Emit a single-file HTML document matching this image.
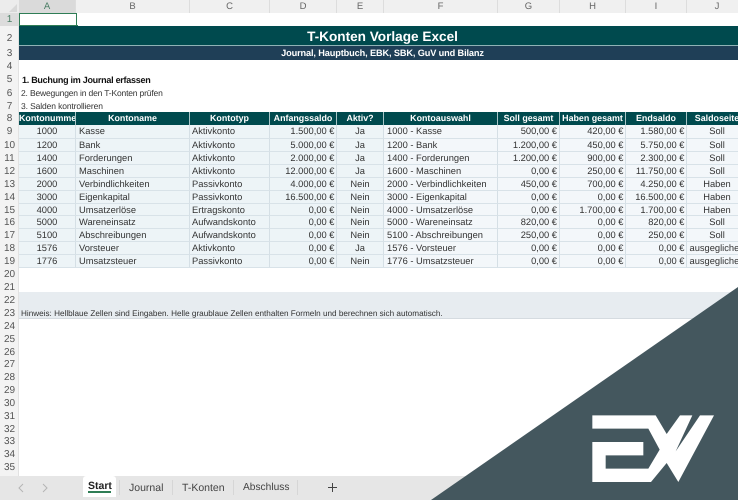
<!DOCTYPE html>
<html><head><meta charset="utf-8"><style>
html,body{margin:0;padding:0;background:#fff}
body{width:738px;height:500px;overflow:hidden;position:relative;font-family:"Liberation Sans",sans-serif;color:#333;text-rendering:geometricPrecision}
#s{position:absolute;inset:0;filter:blur(.35px)}
.a{position:absolute;white-space:nowrap}
.ch{position:absolute;top:0;height:13px;background:#f0f0f0;font-size:9.5px;line-height:13px;text-align:center;color:#666;border-right:1px solid #ddd;box-sizing:border-box}
.rh{position:absolute;left:0;width:19px;font-size:10px;text-align:center;color:#555;line-height:13px}
.r{position:absolute;left:19px;width:730px;height:13px;display:flex}
.r span{display:block;height:100%;box-sizing:border-box;font-size:9.33px;line-height:13px;white-space:nowrap;overflow:hidden;border-right:1px solid #d5dfe5;border-bottom:1px solid #d8e2e8;flex:none;background:#f3f7fa;padding:0 2px}
.r span:nth-child(-n+5){background:#edf4f7}
.r span:nth-child(1){width:57px;text-align:center}
.r span:nth-child(2){width:114px;padding-left:3px}
.r span:nth-child(3){width:80px;padding-left:2px}
.r span:nth-child(4){width:67px;text-align:right;padding-right:1.5px}
.r span:nth-child(5){width:47px;text-align:center}
.r span:nth-child(6){width:114px;padding-left:3px}
.r span:nth-child(7){width:62px;text-align:right}
.r span:nth-child(8){width:66px;text-align:right;padding-right:1.5px}
.r span:nth-child(9){width:61px;text-align:right;padding-right:1.5px}
.r span:nth-child(10){width:60px;text-align:center;padding:0;border-right:0;overflow:visible}
.h span,.h span:nth-child(n){background:#004a4e;color:#fff;font-weight:bold;text-align:center;border-right:1px solid #a9c6c8;border-bottom:0;padding:0;font-size:8.9px;line-height:13px}
.tb{position:absolute;top:482px;font-size:10.5px;color:#444}
.sp{position:absolute;top:480px;width:1px;height:15px;background:#d6d6d6}
</style></head><body><div id="s">
<div class="a" style="left:0;top:0;width:738px;height:13px;background:#f0f0f0;border-bottom:1px solid #d4d4d4;box-sizing:border-box"></div>
<div class="a" style="left:0;top:0;width:19px;height:13px;background:#ececec"></div>
<svg class="a" style="left:8px;top:3px" width="10" height="10"><path d="M9 1V9H1Z" fill="#d8d8d8"/></svg>
<div class="ch" style="left:19px;width:57px;background:#dadada;color:#4a7d64">A</div>
<div class="ch" style="left:76px;width:114px">B</div>
<div class="ch" style="left:190px;width:80px">C</div>
<div class="ch" style="left:270px;width:67px">D</div>
<div class="ch" style="left:337px;width:47px">E</div>
<div class="ch" style="left:384px;width:114px">F</div>
<div class="ch" style="left:498px;width:62px">G</div>
<div class="ch" style="left:560px;width:66px">H</div>
<div class="ch" style="left:626px;width:61px">I</div>
<div class="ch" style="left:687px;width:60px;border-right:0">J</div>

<div class="a" style="left:0;top:13px;width:19px;height:463px;background:#f3f3f3;border-right:1px solid #e2e2e2;box-sizing:border-box"></div>
<div class="rh" style="top:13px;height:13px;background:#dcdcdc;color:#4a7d64">1</div>
<div class="rh" style="top:32px">2</div>
<div class="rh" style="top:47px">3</div>
<div class="rh" style="top:60px">4</div>
<div class="rh" style="top:73px">5</div>
<div class="rh" style="top:87px">6</div>
<div class="rh" style="top:100px">7</div>
<div class="rh" style="top:112px">8</div>
<div class="rh" style="top:125px">9</div>
<div class="rh" style="top:139px">10</div>
<div class="rh" style="top:152px">11</div>
<div class="rh" style="top:165px">12</div>
<div class="rh" style="top:178px">13</div>
<div class="rh" style="top:191px">14</div>
<div class="rh" style="top:204px">15</div>
<div class="rh" style="top:216px">16</div>
<div class="rh" style="top:229px">17</div>
<div class="rh" style="top:242px">18</div>
<div class="rh" style="top:255px">19</div>
<div class="rh" style="top:268px">20</div>
<div class="rh" style="top:281px">21</div>
<div class="rh" style="top:294px">22</div>
<div class="rh" style="top:307px">23</div>
<div class="rh" style="top:320px">24</div>
<div class="rh" style="top:333px">25</div>
<div class="rh" style="top:346px">26</div>
<div class="rh" style="top:358px">27</div>
<div class="rh" style="top:371px">28</div>
<div class="rh" style="top:384px">29</div>
<div class="rh" style="top:397px">30</div>
<div class="rh" style="top:410px">31</div>
<div class="rh" style="top:423px">32</div>
<div class="rh" style="top:435px">33</div>
<div class="rh" style="top:448px">34</div>
<div class="rh" style="top:461px">35</div>

<div class="a" style="left:19px;top:13px;width:58px;height:13px;border:1.5px solid #2f7d55;box-sizing:border-box"></div>
<div class="a" style="left:75px;top:24.5px;width:3px;height:3px;background:#2f7d55"></div>

<div class="a" style="left:19px;top:26px;width:727px;height:20px;background:#004a4e;color:#fff;font-weight:bold;font-size:13.6px;line-height:22px;text-align:center;border-bottom:1px solid #8fb2b5;box-sizing:border-box">T-Konten Vorlage Excel</div>
<div class="a" style="left:19px;top:46px;width:727px;height:14px;background:#1f3f57;color:#fff;font-weight:bold;font-size:9.2px;letter-spacing:-.125px;line-height:14px;text-align:center">Journal, Hauptbuch, EBK, SBK, GuV und Bilanz</div>

<div class="a" style="left:22px;top:73px;font-size:9px;letter-spacing:-.27px;line-height:14px;font-weight:bold;color:#111">1. Buchung im Journal erfassen</div>
<div class="a" style="left:21px;top:87px;font-size:8.5px;letter-spacing:-.17px;line-height:13px">2. Bewegungen in den T-Konten prüfen</div>
<div class="a" style="left:21px;top:100px;font-size:8.5px;letter-spacing:-.12px;line-height:13px">3. Salden kontrollieren</div>

<div class="r h" style="top:111.5px"><span>Kontonummer</span><span>Kontoname</span><span>Kontotyp</span><span>Anfangssaldo</span><span>Aktiv?</span><span>Kontoauswahl</span><span>Soll gesamt</span><span>Haben gesamt</span><span>Endsaldo</span><span style="border-right:0">Saldoseite</span></div>
<div class="r" style="top:125px;height:14px"><span>1000</span><span>Kasse</span><span>Aktivkonto</span><span>1.500,00 €</span><span>Ja</span><span>1000 - Kasse</span><span>500,00 €</span><span>420,00 €</span><span>1.580,00 €</span><span>Soll</span></div>
<div class="r" style="top:139px"><span>1200</span><span>Bank</span><span>Aktivkonto</span><span>5.000,00 €</span><span>Ja</span><span>1200 - Bank</span><span>1.200,00 €</span><span>450,00 €</span><span>5.750,00 €</span><span>Soll</span></div>
<div class="r" style="top:152px"><span>1400</span><span>Forderungen</span><span>Aktivkonto</span><span>2.000,00 €</span><span>Ja</span><span>1400 - Forderungen</span><span>1.200,00 €</span><span>900,00 €</span><span>2.300,00 €</span><span>Soll</span></div>
<div class="r" style="top:165px"><span>1600</span><span>Maschinen</span><span>Aktivkonto</span><span>12.000,00 €</span><span>Ja</span><span>1600 - Maschinen</span><span>0,00 €</span><span>250,00 €</span><span>11.750,00 €</span><span>Soll</span></div>
<div class="r" style="top:178px"><span>2000</span><span>Verbindlichkeiten</span><span>Passivkonto</span><span>4.000,00 €</span><span>Nein</span><span>2000 - Verbindlichkeiten</span><span>450,00 €</span><span>700,00 €</span><span>4.250,00 €</span><span>Haben</span></div>
<div class="r" style="top:191px"><span>3000</span><span>Eigenkapital</span><span>Passivkonto</span><span>16.500,00 €</span><span>Nein</span><span>3000 - Eigenkapital</span><span>0,00 €</span><span>0,00 €</span><span>16.500,00 €</span><span>Haben</span></div>
<div class="r" style="top:204px;height:12px"><span>4000</span><span>Umsatzerlöse</span><span>Ertragskonto</span><span>0,00 €</span><span>Nein</span><span>4000 - Umsatzerlöse</span><span>0,00 €</span><span>1.700,00 €</span><span>1.700,00 €</span><span>Haben</span></div>
<div class="r" style="top:216px"><span>5000</span><span>Wareneinsatz</span><span>Aufwandskonto</span><span>0,00 €</span><span>Nein</span><span>5000 - Wareneinsatz</span><span>820,00 €</span><span>0,00 €</span><span>820,00 €</span><span>Soll</span></div>
<div class="r" style="top:229px"><span>5100</span><span>Abschreibungen</span><span>Aufwandskonto</span><span>0,00 €</span><span>Nein</span><span>5100 - Abschreibungen</span><span>250,00 €</span><span>0,00 €</span><span>250,00 €</span><span>Soll</span></div>
<div class="r" style="top:242px"><span>1576</span><span>Vorsteuer</span><span>Aktivkonto</span><span>0,00 €</span><span>Ja</span><span>1576 - Vorsteuer</span><span>0,00 €</span><span>0,00 €</span><span>0,00 €</span><span>ausgeglichen</span></div>
<div class="r" style="top:255px"><span>1776</span><span>Umsatzsteuer</span><span>Passivkonto</span><span>0,00 €</span><span>Nein</span><span>1776 - Umsatzsteuer</span><span>0,00 €</span><span>0,00 €</span><span>0,00 €</span><span>ausgeglichen</span></div>

<div class="a" style="left:19px;top:292px;width:719px;height:27px;background:#e7ecf0;border-bottom:1px solid #d5dbe0;box-sizing:border-box"></div>
<div class="a" style="left:21px;top:306.5px;font-size:8.16px;line-height:13px">Hinweis: Hellblaue Zellen sind Eingaben. Helle graublaue Zellen enthalten Formeln und berechnen sich automatisch.</div>

<div class="a" style="left:0;top:476px;width:738px;height:24px;background:#e6e6e6"></div>
<div class="a" style="left:83px;top:476px;width:33px;height:21px;background:#fff;border-radius:3px 3px 0 0"></div>
<div class="a" style="left:88px;top:480px;font-size:10.5px;font-weight:bold;color:#222">Start</div>
<div class="a" style="left:88px;top:491px;width:23px;height:1.5px;background:#2f7d55"></div>
<svg class="a" style="left:15px;top:482px" width="40" height="12" fill="none" stroke="#b4b4b4" stroke-width="1"><path d="M8 2L4 6L8 10M28 2L32 6L28 10"/></svg>
<div class="sp" style="left:119px"></div><div class="sp" style="left:172px"></div><div class="sp" style="left:233px"></div><div class="sp" style="left:297px"></div>
<div class="tb" style="left:129px">Journal</div>
<div class="tb" style="left:182px">T-Konten</div>
<div class="tb" style="left:243px;font-size:10.2px">Abschluss</div>
<svg class="a" style="left:327px;top:482px" width="11" height="11" stroke="#444" stroke-width="1"><path d="M5.5 1V10M1 5.5H10"/></svg>

<svg class="a" style="left:0;top:0" width="738" height="500"><path d="M738 287L431 500H738Z" fill="#44575e"/></svg>
<svg class="a" style="left:585px;top:408px" width="135" height="90" viewBox="0 0 405 270"><path fill="#fff" d="M22 22H212L245 78L285 22H322L272 130L345 22H387L280 222L245 165L198 222H22V102H175V142H62V182H190L224 125L190 62H22Z"/></svg>
</div></body></html>
